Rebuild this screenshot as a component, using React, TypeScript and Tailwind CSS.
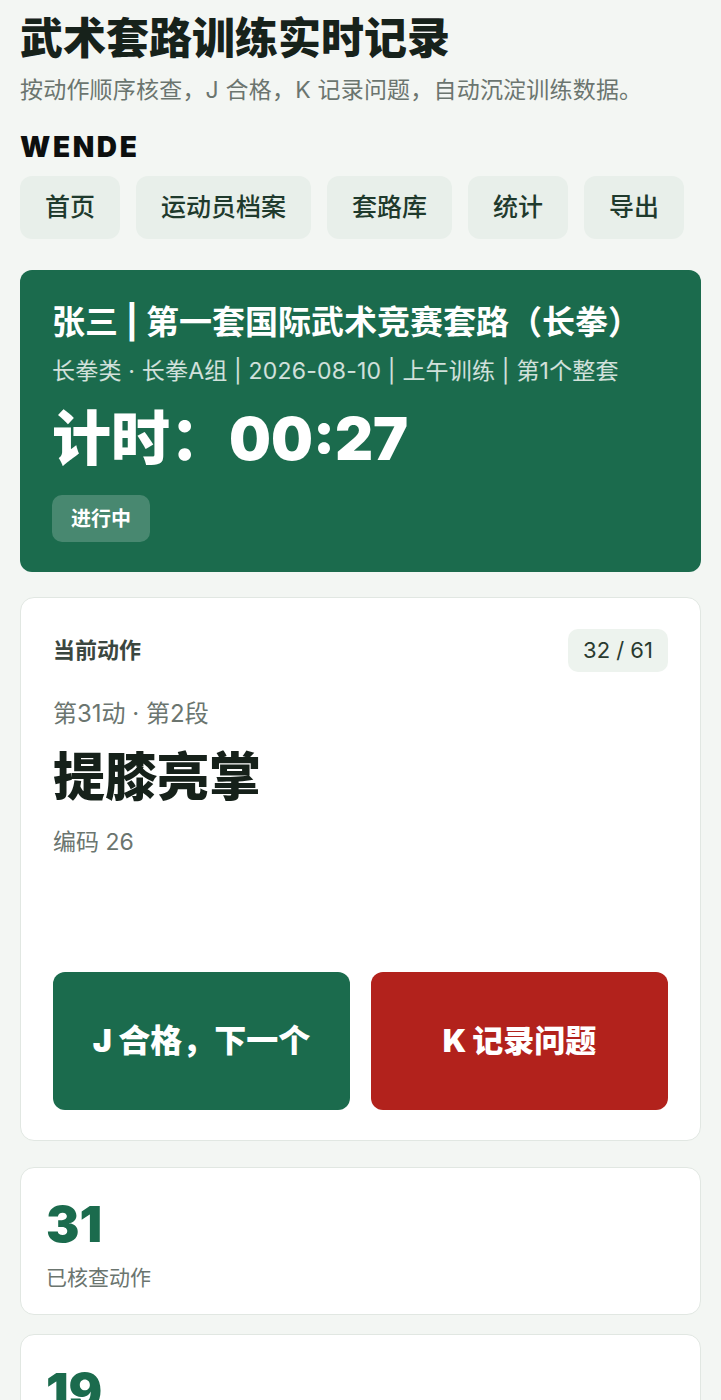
import React from "react";

const font = { fontFamily: '"Inter", "Noto Sans CJK SC", sans-serif' };

export default function App() {
  const nav = ["首页", "运动员档案", "套路库", "统计", "导出"];
  return (
    <div className="min-h-[1400px] bg-[#f3f6f3] px-5 pt-[12px] pb-10" style={font}>
      <h1 className="text-[43px] leading-[52px] font-black text-[#17221b]">武术套路训练实时记录</h1>
      <p className="mt-[11px] text-[23px] leading-[30px] text-[#6b756f] tracking-[0.2px]">按动作顺序核查，J 合格，K 记录问题，自动沉淀训练数据。</p>
      <div className="mt-[26px] text-[28px] leading-[32px] font-black text-[#0d0f0e] tracking-[2.6px]">WENDE</div>
      <nav className="mt-[13px] flex gap-[16px]">
        {nav.map((n) => (
          <div key={n} className="h-[63px] flex items-center px-[25px] rounded-[12px] bg-[#e8efea] text-[25px] font-medium text-[#1f3a2d]">
            {n}
          </div>
        ))}
      </nav>

      <section className="mt-[31px] rounded-[12px] bg-[#1b6b4d] px-[32px] pt-[30px] pb-[30px] text-white">
        <h2 className="text-[33px] leading-[44px] font-bold">张三 | 第一套国际武术竞赛套路（长拳）</h2>
        <div className="mt-[12px] text-[23px] leading-[30px] text-white/80 tracking-[0.2px]">长拳类 · 长拳A组 | 2026-08-10 | 上午训练 | 第1个整套</div>
        <div className="mt-[17px] text-[59px] leading-[72px] font-black">计时：00:27</div>
        <div className="mt-[20px] inline-flex h-[47px] items-center px-[19px] rounded-[10px] bg-white/20 text-[20px] font-bold">进行中</div>
      </section>

      <section className="mt-[25px] rounded-[14px] bg-white border border-[#e1e7e2] px-[32px] pt-[31px] pb-[30px]">
        <div className="flex items-center justify-between">
          <div className="text-[22px] font-bold text-[#3b4740]">当前动作</div>
          <div className="h-[43px] w-[100px] flex items-center justify-center rounded-[10px] bg-[#edf3ee] text-[22px] text-[#293a30]">32 / 61</div>
        </div>
        <div className="mt-[26px] text-[24px] leading-[32px] text-[#6b756f]">第31动 · 第2段</div>
        <div className="mt-[16px] text-[52px] leading-[64px] font-black text-[#16211a]">提膝亮掌</div>
        <div className="mt-[17px] text-[23px] leading-[30px] text-[#6b756f]">编码 26</div>
        <div className="mt-[115px] grid grid-cols-2 gap-[21px]">
          <button className="h-[138px] rounded-[12px] bg-[#1b6b4d] text-white text-[32px] font-black">J 合格，下一个</button>
          <button className="h-[138px] rounded-[12px] bg-[#b2221c] text-white text-[31px] font-black">K 记录问题</button>
        </div>
      </section>

      <section className="mt-[26px] rounded-[14px] bg-white border border-[#e1e7e2] px-[25px] pt-[28px] pb-[22px]">
        <div className="text-[50px] leading-[56px] font-black text-[#1b6b4d]">31</div>
        <div className="mt-[12px] text-[21px] leading-[28px] text-[#6b756f]">已核查动作</div>
      </section>

      <section className="mt-[19px] rounded-[14px] bg-white border border-[#e1e7e2] px-[25px] pt-[28px] pb-[22px]">
        <div className="text-[50px] leading-[56px] font-black text-[#1b6b4d]">19</div>
        <div className="mt-[12px] text-[21px] leading-[28px] text-[#6b756f]">问题动作</div>
      </section>
    </div>
  );
}
